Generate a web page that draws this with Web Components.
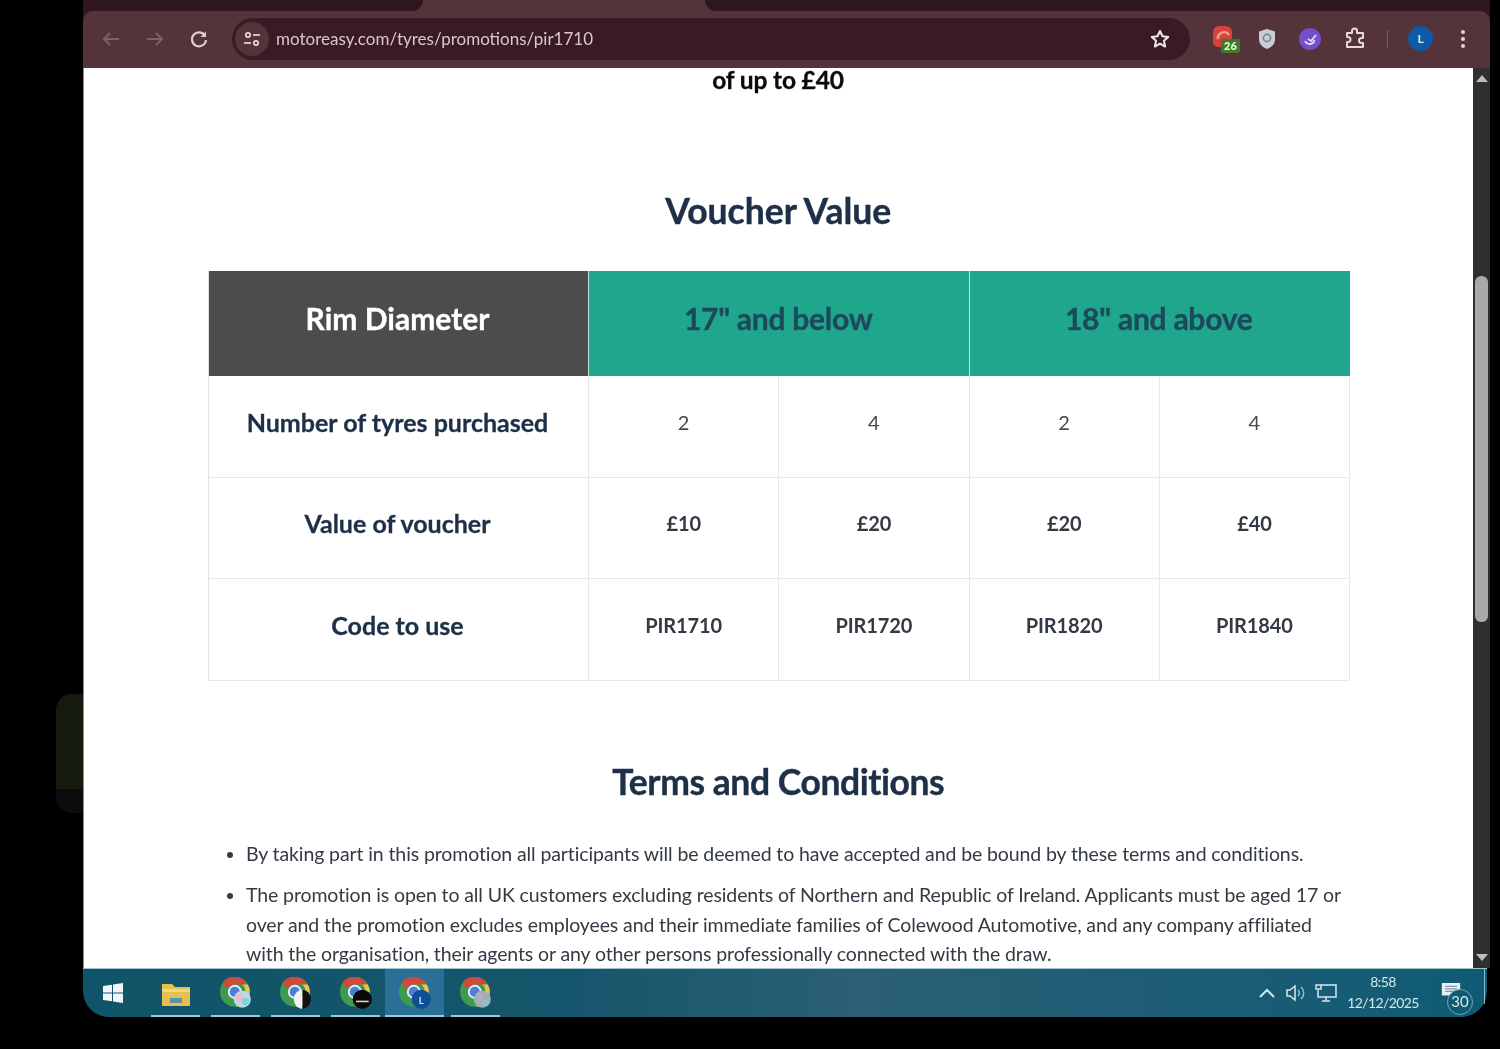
<!DOCTYPE html>
<html lang="en">
<head>
<meta charset="utf-8">
<title>Voucher Value</title>
<style>
    html, body { margin: 0; padding: 0; background: #000; }
    body { width: 1500px; height: 1049px; overflow: hidden; font-family: 'Lato', sans-serif; }
</style>
</head>
<body>
<desktop-screen>
    <browser-window>
        <browser-toolbar slot="toolbar" url="motoreasy.com/tyres/promotions/pir1710"></browser-toolbar>
        <promo-page></promo-page>
    </browser-window>
    <win-taskbar></win-taskbar>
</desktop-screen>

<script>
// Chrome logo, used by all the taskbar buttons
const chromeLogo = `
    <circle cx="14" cy="14" r="14" fill="#3d9a4f"/>
    <path d="M14 0a14 14 0 0 1 12.2 7H14a7 7 0 0 0-6.6 4.6L2.2 5.2A14 14 0 0 1 14 0z" fill="#cf4a3c"/>
    <path d="M26.2 7A14 14 0 0 1 15 28l5.6-9.6A7 7 0 0 0 21 7z" fill="#eec24a"/>
    <circle cx="14" cy="14" r="6.6" fill="#e8eef6"/>
    <circle cx="14" cy="14" r="4.8" fill="#4a80d8"/>`;

class DesktopScreen extends HTMLElement {
    constructor() {
        super();
        this.attachShadow({ mode: 'open' });
        this.shadowRoot.innerHTML = `
            <style>
                :host {
                    display: block;
                    position: relative;
                    width: 1500px;
                    height: 1049px;
                    background: #000;
                    overflow: hidden;
                    /* the reference is a soft, recompressed capture */
                    filter: blur(0.35px);
                }
                .wrap {
                    display: flex;
                    flex-direction: column;
                    width: 1407px;
                    margin-left: 83px;
                }
                /* window peeking out from behind, on the free desktop */
                .ghost {
                    position: absolute;
                    left: 56px;
                    top: 694px;
                    width: 27px;
                    height: 119px;
                    border-radius: 16px 0 0 16px;
                    background: linear-gradient(#141a0c 0, #141a0c 80%, #0c0c0e 80%);
                }
            </style>
            <div class="ghost"></div>
            <div class="wrap"><slot></slot></div>
        `;
    }
}

class BrowserWindow extends HTMLElement {
    constructor() {
        super();
        this.attachShadow({ mode: 'open' });
        this.shadowRoot.innerHTML = `
            <style>
                :host { display: block; width: 1407px; background: #2f1720; }
                .tabs {
                    display: flex;
                    height: 11px;
                    background: #54333a;
                }
                .tabs div { background: #2f1720; }
                .tabs .left { width: 340px; border-radius: 0 0 14px 0; }
                .tabs .gap { flex: 0 0 282px; background: transparent; }
                .tabs .right { flex: 1; border-radius: 0 0 0 14px; }
            </style>
            <div class="tabs"><div class="left"></div><div class="gap"></div><div class="right"></div></div>
            <slot name="toolbar"></slot>
            <slot></slot>
        `;
    }
}

class BrowserToolbar extends HTMLElement {
    constructor() {
        super();
        this.attachShadow({ mode: 'open' });
    }

    connectedCallback() {
        const url = this.getAttribute('url') || '';
        this.shadowRoot.innerHTML = `
            <style>
                :host {
                    display: flex;
                    align-items: center;
                    height: 57px;
                    box-sizing: border-box;
                    padding: 0 0 2px 16px;
                    background: #54333a;
                    border-radius: 10px 10px 0 0;
                }
                svg { display: block; flex: none; }
                .nav { display: flex; gap: 20px; align-items: center; }
                .omni {
                    display: flex;
                    align-items: center;
                    width: 958px;
                    height: 42px;
                    margin-left: 21px;
                    border-radius: 21px;
                    background: #3a1a26;
                    color: #d9c8cb;
                    font: 17px/42px 'Lato', sans-serif;
                }
                .site {
                    display: flex;
                    align-items: center;
                    justify-content: center;
                    width: 34px;
                    height: 34px;
                    margin-left: 3px;
                    border-radius: 50%;
                    background: #54333a;
                }
                .url { flex: 1; margin-left: 7px; }
                .star { margin-right: 19px; }
                .ext { display: flex; align-items: center; margin-left: 23px; }
                .badge-wrap { position: relative; width: 28px; height: 28px; }
                .badge {
                    position: absolute;
                    left: 8px;
                    top: 14px;
                    width: 19px;
                    height: 14px;
                    border-radius: 2px;
                    background: #3f7a25;
                    color: #e6f0dd;
                    font: 800 11px/14px 'Lato', sans-serif;
                    text-align: center;
                }
                .sep { width: 1px; height: 18px; margin: 0 20px; background: #7a5a60; }
                .avatar {
                    width: 25px;
                    height: 25px;
                    border-radius: 50%;
                    background: #0f5aa6;
                    color: #d4e6f7;
                    font: 700 12px/25px 'Lato', sans-serif;
                    text-align: center;
                }
            </style>
            <div class="nav">
                <svg width="24" height="24" viewBox="0 0 24 24" fill="none" stroke="#7d6268" stroke-width="2"><path d="M20 12H5M11 6l-6 6 6 6"/></svg>
                <svg width="24" height="24" viewBox="0 0 24 24" fill="none" stroke="#7d6268" stroke-width="2"><path d="M4 12h15M13 6l6 6-6 6"/></svg>
                <svg width="24" height="24" viewBox="0 0 24 24" fill="none" stroke="#dccdd0" stroke-width="2.2"><path d="M18.2 9A7 7 0 1 0 19 13"/><path d="M19 4.5V10h-5.5" fill="#dccdd0" stroke="none"/></svg>
            </div>
            <div class="omni">
                <div class="site">
                    <svg width="20" height="20" viewBox="0 0 20 20" fill="none" stroke="#e6dadc" stroke-width="1.7"><circle cx="6" cy="6" r="2.2"/><path d="M11 6h7"/><circle cx="14" cy="14" r="2.2"/><path d="M2 14h7"/></svg>
                </div>
                <span class="url">${url}</span>
                <svg class="star" width="22" height="22" viewBox="0 0 24 24" fill="none" stroke="#efe6e7" stroke-width="2.2" stroke-linejoin="round"><path d="M12 3.2l2.7 5.8 6.3.7-4.7 4.3 1.3 6.2-5.6-3.2-5.6 3.2 1.3-6.2L3 9.7l6.3-.7z"/></svg>
            </div>
            <div class="ext">
                <div class="badge-wrap">
                    <svg width="28" height="28" viewBox="0 0 28 28"><path d="M0 7a6 6 0 0 1 6-6h7a6 6 0 0 1 6 6v8H8v7H5a5 5 0 0 1-5-5z" fill="#d8423c"/><path d="M5 14a6 6 0 0 1 11-4" fill="none" stroke="#f0a090" stroke-width="2.4"/></svg>
                    <span class="badge">26</span>
                </div>
                <svg style="margin-left:16px" width="20" height="24" viewBox="0 0 20 24"><path d="M10 2l8 2.5V12c0 5-3.500 8.500-8 10-4.500-1.500-8-5-8-10V4.500z" fill="#c9ced4"/><circle cx="10" cy="11" r="3.600" fill="none" stroke="#7d8690" stroke-width="1.600"/></svg>
                <svg style="margin-left:22px" width="22" height="22" viewBox="0 0 22 22"><circle cx="11" cy="11" r="11" fill="#7350c8"/><path d="M6 13a5 5 0 0 0 9.500-1M9 11l3 2 5-6" fill="none" stroke="#e4dcf7" stroke-width="1.800"/></svg>
                <svg style="margin-left:22px" width="24" height="24" viewBox="0 0 24 24" fill="none" stroke="#ead9dc" stroke-width="2" stroke-linejoin="round"><path d="M4 7h5V5a2.500 2.500 0 0 1 5 0v2h6v5h-1.500a2.500 2.500 0 0 0 0 5H20v4H4v-5h1a2.500 2.500 0 0 0 0-5H4z" transform="translate(0 -1)"/></svg>
                <div class="sep"></div>
                <div class="avatar">L</div>
                <svg style="margin-left:27px" width="6" height="20" viewBox="0 0 6 20" fill="#e4d3d6"><circle cx="3" cy="3" r="2"/><circle cx="3" cy="10" r="2"/><circle cx="3" cy="17" r="2"/></svg>
            </div>
        `;
    }
}

class PromoPage extends HTMLElement {
    constructor() {
        super();
        this.attachShadow({ mode: 'open' });
        this.shadowRoot.innerHTML = `
            <style>
                :host {
                    display: flex;
                    height: 900px;
                }
                .page {
                    flex: none;
                    width: 1390px;
                    box-sizing: border-box;
                    padding: 0 124px 0 125px;
                    background: #fff;
                    border-left: 1px solid #8a8a8a;
                    color: #1e3048;
                    font-family: 'Lato', sans-serif;
                }
                .lead {
                    margin: 0;
                    height: 26px;
                    padding-right: 2px;
                    text-align: center;
                    color: #0b0b0d;
                    font-size: 24.5px;
                    font-weight: 700;
                    line-height: 24px;
                    letter-spacing: -0.15px;
                    -webkit-text-stroke: 0.3px currentColor;
                }
                h2 {
                    margin: 0;
                    padding-right: 1.5px;
                    text-align: center;
                    font-size: 35.5px;
                    font-weight: 700;
                    line-height: 42px;
                    -webkit-text-stroke: 0.4px currentColor;
                }
                .v { margin-top: 96px; }
                .t { margin-top: 80px; letter-spacing: -0.45px; }
                ul {
                    margin: 36px 0 0;
                    padding: 0 0 0 37px;
                    color: #333a44;
                    font-size: 19.5px;
                    line-height: 29.500px;
                    letter-spacing: -0.11px;
                }
                li { margin-bottom: 12px; }
                .bar {
                    flex: 1;
                    display: flex;
                    flex-direction: column;
                    align-items: center;
                    background: #2f2f2f;
                }
                .arrow { width: 0; height: 0; border: 6px solid transparent; border-top: 0; border-bottom: 7px solid #bdbdbd; margin-top: 7px; }
                .thumb { width: 13px; height: 346px; margin-top: 194px; border-radius: 6px; background: #a9a9a9; }
                .arrow.down { border-bottom: 0; border-top: 7px solid #bdbdbd; margin-top: auto; margin-bottom: 7px; }
            </style>
            <div class="page">
                <p class="lead">of up to £40</p>
                <h2 class="v">Voucher Value</h2>
                <voucher-table></voucher-table>
                <h2 class="t">Terms and Conditions</h2>
                <ul>
                    <li>By taking part in this promotion all participants will be deemed to have accepted and be bound by these terms and conditions.</li>
                    <li>The promotion is open to all UK customers excluding residents of Northern and Republic of Ireland. Applicants must be aged 17 or over and the promotion excludes employees and their immediate families of Colewood Automotive, and any company affiliated with the organisation, their agents or any other persons professionally connected with the draw.</li>
                </ul>
            </div>
            <div class="bar">
                <div class="arrow"></div>
                <div class="thumb"></div>
                <div class="arrow down"></div>
            </div>
        `;
    }
}

class VoucherTable extends HTMLElement {
    constructor() {
        super();
        this.attachShadow({ mode: 'open' });
        const rows = [
            ['Number of tyres purchased', '2', '4', '2', '4', 'n'],
            ['Value of voucher', '£10', '£20', '£20', '£40', 'b'],
            ['Code to use', 'PIR1710', 'PIR1720', 'PIR1820', 'PIR1840', 'b'],
        ];
        const body = rows.map(r => `
            <div class="label">${r[0]}</div>
            ${r.slice(1, 5).map(v => `<div class="val ${r[5]}">${v}</div>`).join('')}
        `).join('');
        this.shadowRoot.innerHTML = `
            <style>
                :host {
                    display: grid;
                    grid-template-columns: 380px repeat(4, 190.25px);
                    grid-template-rows: 105px repeat(3, 101.67px);
                    margin-top: 39px;
                    margin-left: -1px;
                    width: 1142px;
                    box-sizing: border-box;
                    border-left: 1px solid #e3e3e3;
                    font-family: 'Lato', sans-serif;
                }
                .rim, .size {
                    font-size: 30px;
                    font-weight: 700;
                    line-height: 95px;
                    text-align: center;
                    padding-bottom: 10px;
                    box-sizing: border-box;
                    -webkit-text-stroke: 0.35px currentColor;
                }
                .rim { background: #4c4c4c; color: #fff; padding-right: 3px; }
                .size {
                    grid-column: span 2;
                    margin-left: -1px;
                    padding-right: 2px;
                    background: #20a68d;
                    color: #1c4a5a;
                    border-left: 1px solid #bfe8e0;
                    letter-spacing: -0.25px;
                }
                .label, .val {
                    display: flex;
                    align-items: center;
                    justify-content: center;
                    box-sizing: border-box;
                    padding-bottom: 9px;
                    border-right: 1px solid #e8e8e8;
                    border-bottom: 1px solid #e8e8e8;
                }
                .label {
                    padding-right: 2px;
                    color: #1e3048;
                    font-size: 25px;
                    font-weight: 700;
                    -webkit-text-stroke: 0.3px currentColor;
                }
                .val { color: #444a52; font-size: 20px; }
                .val.b { color: #333a44; font-weight: 700; letter-spacing: -0.1px; }
            </style>
            <div class="rim">Rim Diameter</div>
            <div class="size">17" and below</div>
            <div class="size">18" and above</div>
            ${body}
        `;
    }
}

class WinTaskbar extends HTMLElement {
    constructor() {
        super();
        this.attachShadow({ mode: 'open' });
        const badges = [
            '<circle cx="21" cy="21" r="8" fill="#b9d9ee"/><circle cx="18" cy="19" r="3.500" fill="#f2b8c8"/><circle cx="24" cy="23" r="3.500" fill="#7fd6d0"/>',
            '<path d="M21 12a8 9 0 0 1 0 18z" fill="#111"/><path d="M21 12a8 9 0 0 0 0 18z" fill="#f0f0f0"/>',
            '<circle cx="21" cy="21" r="9" fill="#0a0a0a"/><path d="M15 23h12" stroke="#d8d8c8" stroke-width="1.500"/>',
            '<circle cx="21" cy="21" r="9" fill="#0f4f98"/>',
            '<circle cx="21" cy="21" r="8" fill="#9fb0bc"/><circle cx="19" cy="19" r="3" fill="#c8a8b0"/><circle cx="24" cy="24" r="3" fill="#8fc0c8"/>',
        ];
        const chromes = badges.map((b, i) => `
            <div class="app chrome ${i === 3 ? 'active' : ''}" style="margin-left:${[11, 11, 11, 5, 7][i]}px">
                <svg width="34" height="34" viewBox="0 0 32 32">${chromeLogo}${b}${i === 3 ? '<text x="21" y="25" text-anchor="middle" font-size="9" font-weight="700" fill="#d4e6f7" font-family="Lato, sans-serif">L</text>' : ''}</svg>
            </div>`).join('');
        this.shadowRoot.innerHTML = `
            <style>
                :host {
                    display: flex;
                    position: relative;
                    align-items: stretch;
                    height: 49px;
                    width: 1404px;
                    box-sizing: border-box;
                    border-top: 1px solid #9fc4d2;
                    border-radius: 0 0 26px 26px;
                    background: linear-gradient(90deg, #0f5468 0, #16566c 35%, #2b5f75 55%, #0f5b74 100%);
                    color: #d6e6ee;
                    font-family: 'Lato', sans-serif;
                }
                svg { display: block; }
                .start { display: flex; align-items: center; margin-left: 20px; }
                .app {
                    display: flex;
                    align-items: center;
                    justify-content: center;
                    width: 49px;
                    box-sizing: border-box;
                    padding-top: 3px;
                    border-bottom: 2px solid #9ccadd;
                }
                .app.chrome { padding-left: 3px; }
                .app.active { width: 59px; background: #2a6f95; }
                .folder { margin-left: 28px; }
                .tray { display: flex; align-items: center; margin-left: auto; }
                .clock { width: 80px; margin-left: 6px; text-align: center; font-size: 14px; line-height: 21px; letter-spacing: -0.6px; padding-bottom: 3px; }
                .note { position: relative; width: 36px; height: 34px; margin: 12px 10px 0 18px; }
                .count {
                    position: absolute;
                    left: 6px;
                    top: 7px;
                    width: 24px;
                    height: 24px;
                    border: 1px solid #6fa6bd;
                    border-radius: 50%;
                    background: #0f5b74;
                    font-size: 15px;
                    line-height: 22px;
                    text-align: center;
                }
                /* thin light edge on the right of the bar */
                .edge {
                    position: absolute;
                    right: 2px;
                    top: 0;
                    width: 1px;
                    height: 35px;
                    background: #8fb9c9;
                }
            </style>
            <div class="start">
                <svg width="20" height="20" viewBox="0 0 20 20" fill="#f2f6f8"><path d="M0 3l9-1.300V9.500H0zM10 1.500L20 0v9.500H10zM0 10.500h9v7.800L0 17zM10 10.500h10V20l-10-1.500z"/></svg>
            </div>
            <div class="app folder">
                <svg width="28" height="24" viewBox="0 0 28 24"><path d="M0 2h10l3 3h15v19H0z" fill="#e6c04e"/><path d="M0 7h28v3H0z" fill="#f2d878"/><path d="M8 16h12v5H8z" fill="#5d8fae"/></svg>
            </div>
            ${chromes}
            <div class="tray">
                <svg width="20" height="14" viewBox="0 0 20 14" fill="none" stroke="#d6e6ee" stroke-width="2"><path d="M3 11l7-7 7 7"/></svg>
                <svg style="margin-left:8px" width="22" height="20" viewBox="0 0 22 20" fill="none" stroke="#d6e6ee" stroke-width="1.500"><path d="M2 7h3l5-4v14l-5-4H2z"/><path d="M13 7a4 4 0 0 1 0 6M16 4a8 8 0 0 1 0 12" opacity=".7"/></svg>
                <svg style="margin-left:8px" width="22" height="20" viewBox="0 0 22 20" fill="none" stroke="#d6e6ee" stroke-width="1.500"><path d="M6 2h15v12H3V7M11 14v4M7 18h8"/><path d="M1 2h5v4H1z"/></svg>
                <div class="clock">8:58<br>12/12/2025</div>
                <div class="note">
                    <svg width="20" height="17" viewBox="0 0 24 20"><path d="M1 1h22v15H1z" fill="#e8f0f4"/><path d="M5 5h14M5 8h14M5 11h10" stroke="#7f9aa8" stroke-width="1.300"/></svg>
                    <span class="count">30</span>
                </div>
            </div>
            <div class="edge"></div>
        `;
    }
}

customElements.define('desktop-screen', DesktopScreen);
customElements.define('browser-window', BrowserWindow);
customElements.define('browser-toolbar', BrowserToolbar);
customElements.define('promo-page', PromoPage);
customElements.define('voucher-table', VoucherTable);
customElements.define('win-taskbar', WinTaskbar);
</script>
</body>
</html>
